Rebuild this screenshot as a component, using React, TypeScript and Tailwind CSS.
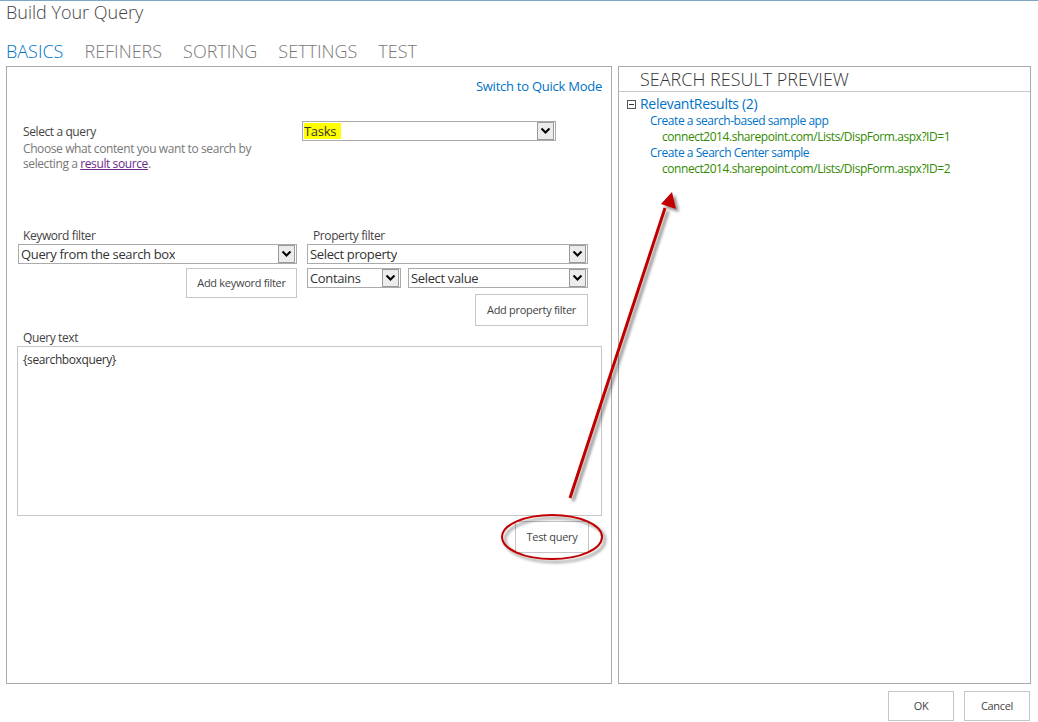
import React from "react";

const font = { fontFamily: '"Open Sans", "Noto Sans", sans-serif' };

function Chevron() {
  return (
    <div className="w-[17px] h-[18px] border border-[#9a9a9a] bg-[#ececec] flex items-center justify-center shrink-0 mr-[1px]">
      <svg width="11" height="8" viewBox="0 0 11 8">
        <path d="M1.5 1.5 L5.5 5.5 L9.5 1.5" stroke="#000" strokeWidth="2" fill="none" />
      </svg>
    </div>
  );
}

function Select({ w, children }: { w: string; children: React.ReactNode }) {
  return (
    <div className={`${w} h-[20px] border border-[#ababab] bg-white flex items-center justify-between pl-[2px]`}>
      <div className="text-[13px] tracking-[-0.35px] text-[#333] leading-[18px] truncate">{children}</div>
      <Chevron />
    </div>
  );
}

function Btn({ w, h, children }: { w: string; h: string; children: React.ReactNode }) {
  return (
    <div className={`${w} ${h} border border-[#c6c6c6] bg-white flex items-center justify-center text-[11px] tracking-[-0.3px] text-[#444]`}>
      {children}
    </div>
  );
}

export default function App() {
  return (
    <div className="relative w-[1038px] h-[722px] bg-white border-t border-[#7fa5c4] overflow-hidden" style={font}>
      <div className="pl-[6px] text-[18px] leading-[22px] text-[#444] font-light">Build Your Query</div>
      <div className="flex gap-[21px] pl-[6px] mt-[17px] text-[18px] leading-[22px] text-[#777] font-light">
        <span className="text-[#0072c6]">BASICS</span>
        <span>REFINERS</span>
        <span>SORTING</span>
        <span>SETTINGS</span>
        <span>TEST</span>
      </div>
      <div className="flex gap-[6px] pl-[6px] mt-[4px]">
        {/* Left panel */}
        <div className="w-[606px] h-[618px] border border-[#ababab] flex flex-col">
          <div className="flex justify-end pr-[9px] pt-[11px] text-[13px] tracking-[-0.25px] leading-[17px] text-[#0072c6]">Switch to Quick Mode</div>
          <div className="flex mt-[26px] pl-[16px]">
            <div className="w-[279px] text-[12px] tracking-[-0.4px] mt-[2px]">
              <div className="text-[#444] leading-[18px]">Select a query</div>
              <div className="text-[#777] leading-[15px]">
                Choose what content you want to search by
                <br />
                selecting a <span className="text-[#6b2a8c] underline">result source</span>.
              </div>
            </div>
            <div className="w-[254px] h-[20px] border border-[#ababab] flex items-center justify-between pl-[1px]">
              <span className="text-[13px] tracking-[-0.3px] leading-[16px] bg-[#ffff00] text-[#333] pr-[5px]">Tasks</span>
              <Chevron />
            </div>
          </div>
          <div className="flex mt-[56px] pl-[11px] gap-[10px]">
            <div className="w-[279px] flex flex-col">
              <div className="pl-[5px] text-[12px] tracking-[-0.4px] leading-[17px] text-[#444]">Keyword filter</div>
              <Select w="w-[279px]">Query from the search box</Select>
              <div className="flex justify-end mt-[4px]">
                <Btn w="w-[111px]" h="h-[30px]">Add keyword filter</Btn>
              </div>
            </div>
            <div className="w-[281px] flex flex-col">
              <div className="pl-[6px] text-[12px] tracking-[-0.4px] leading-[17px] text-[#444]">Property filter</div>
              <Select w="w-[281px]">Select property</Select>
              <div className="flex gap-[7px] mt-[4px]">
                <Select w="w-[94px]">Contains</Select>
                <Select w="w-[180px]">Select value</Select>
              </div>
              <div className="flex justify-end mt-[6px]">
                <Btn w="w-[113px]" h="h-[32px]">Add property filter</Btn>
              </div>
            </div>
          </div>
          <div className="pl-[16px] mt-[3px] text-[12px] tracking-[-0.4px] leading-[17px] text-[#444]">Query text</div>
          <div className="ml-[10px] w-[585px] h-[170px] border border-[#c6c6c6] px-[5px] py-[5px] text-[12px] tracking-[-0.4px] leading-[16px] text-[#333]">
            {"{searchboxquery}"}
          </div>
          <div className="flex justify-end pr-[22px] mt-[5px]">
            <Btn w="w-[74px]" h="h-[32px]">Test query</Btn>
          </div>
        </div>
        {/* Right panel */}
        <div className="w-[413px] h-[618px] border border-[#ababab] flex flex-col">
          <div className="h-[25px] border-b border-[#c6c6c6] pl-[21px] text-[18px] leading-[25px] text-[#333] font-light">SEARCH RESULT PREVIEW</div>
          <div className="pl-[8px] pt-[3px]">
            <div className="flex items-center gap-[4px] text-[14px] tracking-[-0.3px] leading-[18px] text-[#0072c6]">
              <div className="w-[9px] h-[9px] border border-[#555] flex items-center justify-center">
                <div className="w-[5px] h-[1px] bg-[#333]" />
              </div>
              <span>RelevantResults (2)</span>
            </div>
            <div className="text-[12px] tracking-[-0.45px] leading-[16px]">
              <div className="pl-[23px] text-[#0072c6]">Create a search-based sample app</div>
              <div className="pl-[35px] text-[#338a00]">connect2014.sharepoint.com/Lists/DispForm.aspx?ID=1</div>
              <div className="pl-[23px] text-[#0072c6]">Create a Search Center sample</div>
              <div className="pl-[35px] text-[#338a00]">connect2014.sharepoint.com/Lists/DispForm.aspx?ID=2</div>
            </div>
          </div>
        </div>
      </div>
      <div className="flex justify-end gap-[10px] pr-[8px] mt-[7px]">
        <Btn w="w-[66px]" h="h-[30px]">OK</Btn>
        <Btn w="w-[66px]" h="h-[30px]">Cancel</Btn>
      </div>
      {/* annotation overlay */}
      <svg className="absolute left-0 top-0 pointer-events-none" width="1038" height="722" viewBox="0 0 1038 722">
        <defs>
          <filter id="sh" x="-20%" y="-20%" width="140%" height="140%">
            <feGaussianBlur in="SourceAlpha" stdDeviation="1.5" />
            <feOffset dx="3" dy="3" result="b" />
            <feComponentTransfer><feFuncA type="linear" slope="0.45" /></feComponentTransfer>
            <feMerge>
              <feMergeNode />
              <feMergeNode in="SourceGraphic" />
            </feMerge>
          </filter>
        </defs>
        <g filter="url(#sh)">
          <ellipse cx="552" cy="536" rx="50" ry="22" stroke="#c00000" strokeWidth="2" fill="none" />
          <line x1="570" y1="497" x2="665" y2="207" stroke="#c00000" strokeWidth="3" />
          <polygon points="672,191 676,208 661,203" fill="#c00000" />
        </g>
      </svg>
    </div>
  );
}
